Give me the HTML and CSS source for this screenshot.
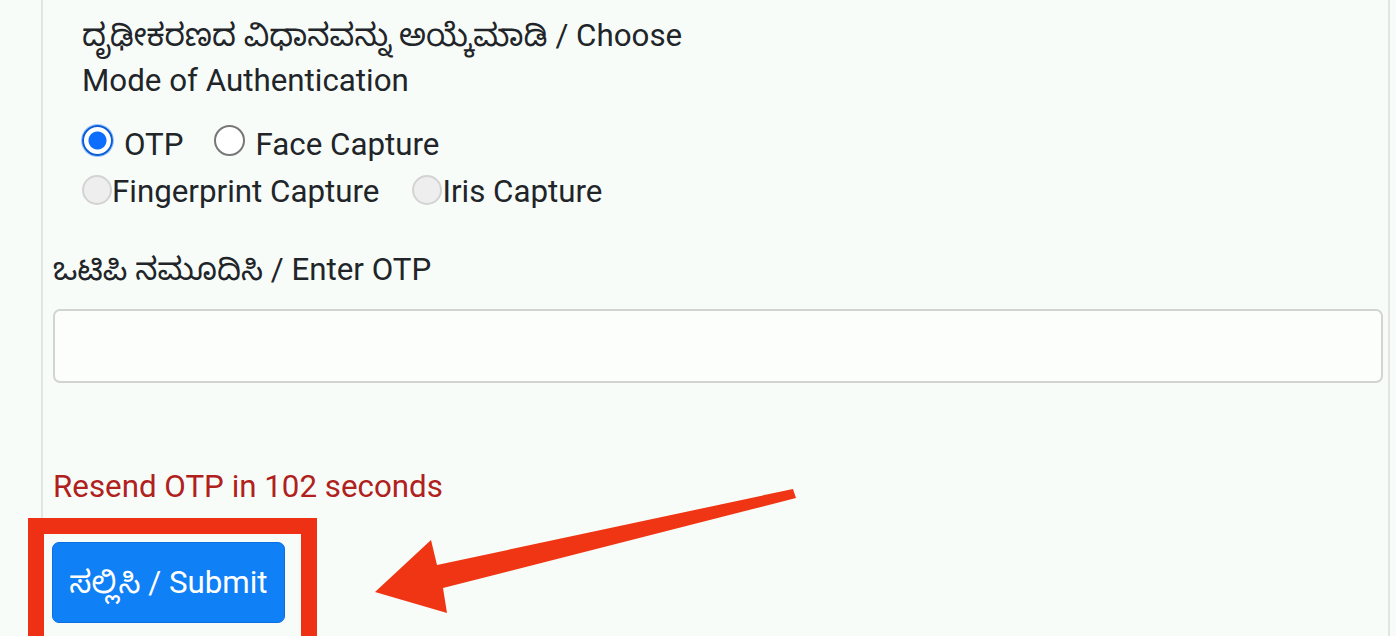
FILE: index.html
```html
<!DOCTYPE html>
<html lang="kn">
<head>
<meta charset="utf-8">
<title>OTP</title>
<link rel="stylesheet" href="styles.css">
</head>
<body>
<div class="panel">
  <div class="mode">
    <div class="mode-title">ದೃಢೀಕರಣದ ವಿಧಾನವನ್ನು ಅಯ್ಕೆಮಾಡಿ / Choose<br>Mode of Authentication</div>
    <div class="radio-row row-one">
      <label class="opt"><input type="radio" name="mode" class="radio" checked><span class="opt-text">OTP</span></label>
      <label class="opt"><input type="radio" name="mode" class="radio"><span class="opt-text">Face Capture</span></label>
    </div>
    <div class="radio-row row-two">
      <label class="opt tight"><input type="radio" name="mode" class="radio off" disabled><span>Fingerprint Capture</span></label>
      <label class="opt tight"><input type="radio" name="mode" class="radio off" disabled><span>Iris Capture</span></label>
    </div>
  </div>
  <div class="otp-label">ಒಟಿಪಿ ನಮೂದಿಸಿ / Enter OTP</div>
  <input type="text" class="otp-input">
  <div class="resend">Resend OTP in 102 seconds</div>
  <button class="submit">ಸಲ್ಲಿಸಿ / Submit</button>
</div>
<div class="highlight"></div>
<svg class="arrow" width="1396" height="636" viewBox="0 0 1396 636">
  <polygon points="793,489 796,498 443,588 447,613 375,592 431,540 437,565" fill="#f03514"/>
</svg>
</body>
</html>
```

FILE: styles.css
```css
html, body {
  margin: 0;
  padding: 0;
}
body {
  background: #f8fcf8;
  font-family: Roboto, "Noto Sans Kannada", "Noto Sans", sans-serif;
  font-size: 31.3px;
  line-height: 45px;
  color: #212529;
  width: 1396px;
  height: 636px;
  overflow: hidden;
  position: relative;
}
.panel {
  margin-left: 41px;
  width: 1349px;
  height: 636px;
  border-left: 2px solid #e3e5e3;
  border-right: 2px solid #e3e5e3;
  padding: 13px 9px 0 10px;
  box-sizing: border-box;
  display: flex;
  flex-direction: column;
  align-items: flex-start;
  overflow: hidden;
}
.mode {
  padding-left: 29px;
}
.radio-row {
  display: flex;
  align-items: center;
  height: 45px;
}
.row-one {
  margin-top: 19px;
  gap: 30px;
}
.row-two {
  margin-top: 2px;
  gap: 33px;
}
.opt {
  display: flex;
  align-items: center;
}
.opt-text {
  margin-left: 11px;
}
.radio {
  appearance: none;
  -webkit-appearance: none;
  margin: 0 0 8px 0;
  width: 31px;
  height: 31px;
  border-radius: 50%;
  border: 2px solid #777;
  background: #fff;
  box-sizing: border-box;
  flex: none;
}
.radio:checked {
  border: 2px solid #0b5ed7;
  background: radial-gradient(circle, #0d6efd 0 8.5px, #fff 9.5px 100%);
  box-shadow: 0 0 0 1px #9ec5fe;
}
.radio.off {
  border: 2px solid #d3d3d3;
  background: #eeeeee;
  margin-bottom: 4px;
  width: 30px;
  height: 30px;
}
.otp-label {
  margin-top: 33px;
}
.otp-input {
  margin-top: 17px;
  width: 1330px;
  height: 74px;
  border: 2px solid #d2d4d2;
  border-radius: 7px;
  background: #fbfefb;
  box-sizing: border-box;
  font: inherit;
  flex: none;
}
.resend {
  margin-top: 81px;
  color: #b0211d;
}
.submit {
  margin-top: 33px;
  margin-left: -1px;
  width: 233px;
  height: 81px;
  border: 1px solid #0a6fe0;
  border-radius: 7px;
  background: #0f80f5;
  color: #fff;
  font: inherit;
  padding: 0;
  flex: none;
}
.highlight {
  position: absolute;
  left: 28px;
  top: 518px;
  width: 289px;
  height: 118px;
  border: 16px solid #ee3014;
  border-bottom: 0;
  box-sizing: border-box;
}
.arrow {
  position: absolute;
  left: 0;
  top: 0;
  pointer-events: none;
}
```
